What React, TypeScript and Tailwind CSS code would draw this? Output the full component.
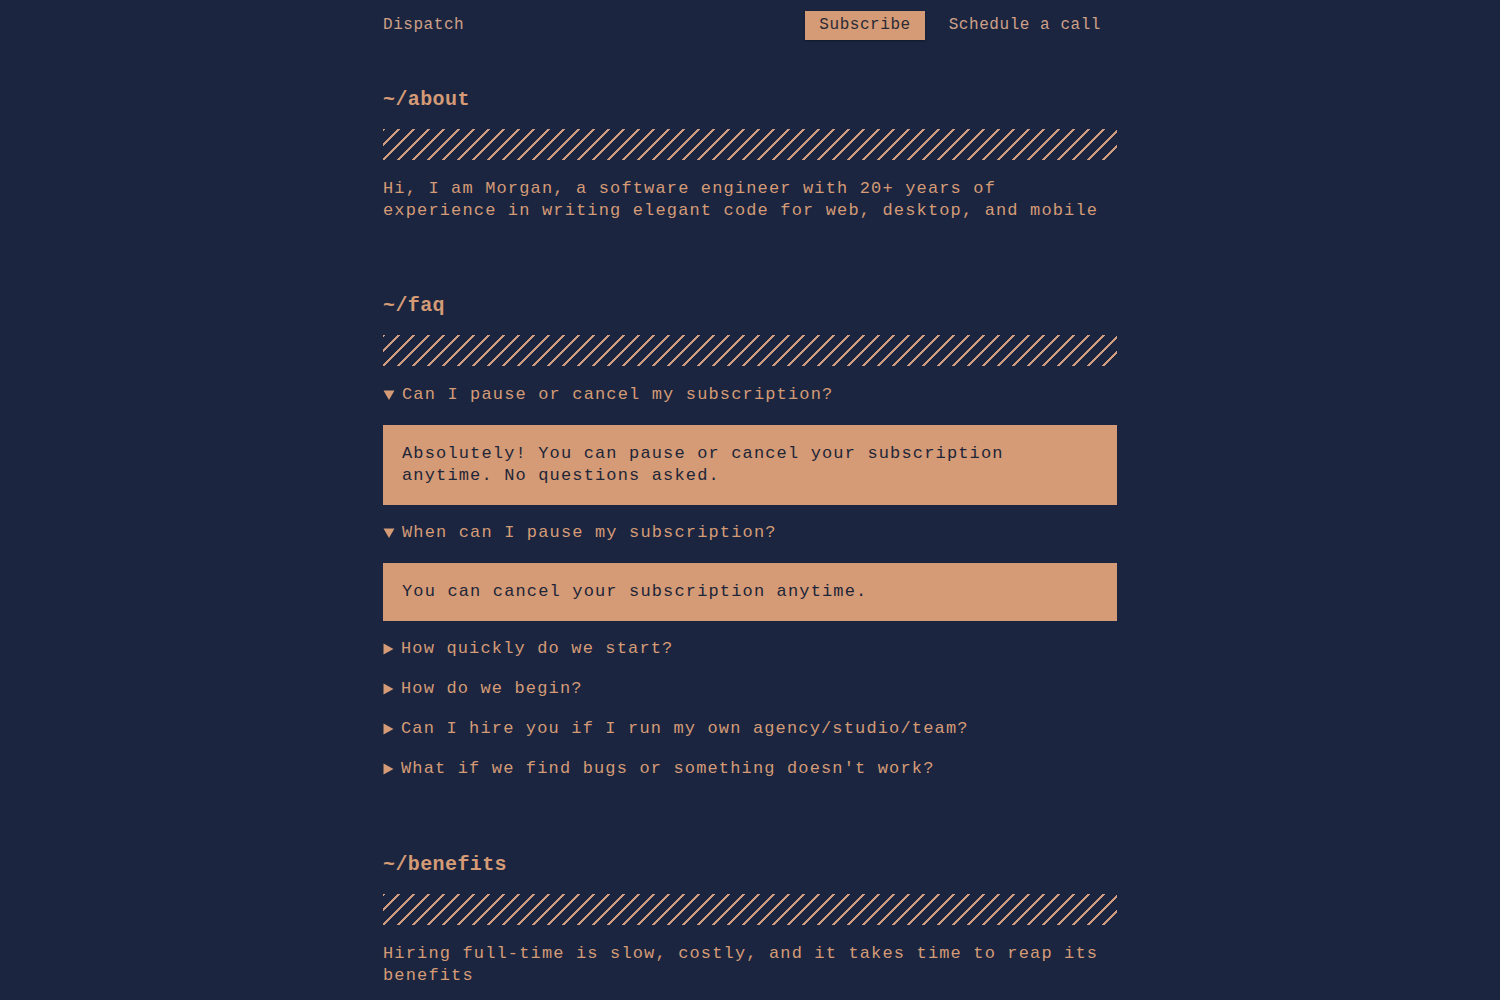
import React from "react";

const ACCENT = "#d49b76";

function Stripe() {
  return (
    <div className="h-[31px] w-full bg-[image:repeating-linear-gradient(135deg,#d09c80_0_1.9px,transparent_1.9px_10.6px)]" />
  );
}

function Down() {
  return (
    <svg width="12" height="10" viewBox="0 0 12 10" className="shrink-0">
      <polygon points="0.5,0.5 11.5,0.5 6,10" fill={ACCENT} />
    </svg>
  );
}

function Right() {
  return (
    <svg width="11" height="12" viewBox="0 0 11 12" className="shrink-0">
      <polygon points="0.5,0.5 10.5,6 0.5,11.5" fill={ACCENT} />
    </svg>
  );
}

function Question({ open, children }: { open?: boolean; children: React.ReactNode }) {
  return (
    <div className="flex h-[22px] items-center gap-[7px] leading-[22px]">
      {open ? <Down /> : <Right />}
      <span>{children}</span>
    </div>
  );
}

function Answer({ children }: { children: React.ReactNode }) {
  return (
    <div className="mt-[19px] bg-[#d49b76] px-[19px] py-[18px] leading-[22px] text-[#1e2538]">
      {children}
    </div>
  );
}

export default function App() {
  return (
    <div className="min-h-screen bg-[#1b2540] font-['Liberation_Mono',monospace] text-[17px] tracking-[1.15px] text-[#d49b76]">
      <div className="mx-auto w-[734px] pb-10">
        <header className="flex h-[50px] items-center justify-between text-[16px] tracking-[0.55px]">
          <span className="text-[#cfa088]">Dispatch</span>
          <div className="flex items-center gap-[8px]">
            <span className="flex h-[29px] items-center bg-[#d49b76] px-[14px] text-[#2a2a35] shadow-[0_1px_2px_rgba(0,0,0,0.35)]">
              Subscribe
            </span>
            <span className="flex h-[29px] items-center px-[16px] text-[#cfa088]">Schedule a call</span>
          </div>
        </header>

        <section className="mt-[38px]">
          <h2 className="text-[20px] font-bold leading-[24px] tracking-[0.4px]">~/about</h2>
          <div className="mt-[17px]">
            <Stripe />
          </div>
          <p className="mt-[18px] leading-[22px]">
            Hi, I am Morgan, a software engineer with 20+ years of experience in writing elegant code for web,
            desktop, and mobile
          </p>
        </section>

        <section className="mt-[72px]">
          <h2 className="text-[20px] font-bold leading-[24px] tracking-[0.4px]">~/faq</h2>
          <div className="mt-[17px]">
            <Stripe />
          </div>
          <div className="mt-[18px] flex flex-col gap-[17px]">
            <div>
              <Question open>Can I pause or cancel my subscription?</Question>
              <Answer>Absolutely! You can pause or cancel your subscription anytime. No questions asked.</Answer>
            </div>
            <div>
              <Question open>When can I pause my subscription?</Question>
              <Answer>You can cancel your subscription anytime.</Answer>
            </div>
            <div className="flex flex-col gap-[18px]">
              <Question>How quickly do we start?</Question>
              <Question>How do we begin?</Question>
              <Question>Can I hire you if I run my own agency/studio/team?</Question>
              <Question>What if we find bugs or something doesn't work?</Question>
            </div>
          </div>
        </section>

        <section className="mt-[73px]">
          <h2 className="text-[20px] font-bold leading-[24px] tracking-[0.4px]">~/benefits</h2>
          <div className="mt-[17px]">
            <Stripe />
          </div>
          <p className="mt-[18px] leading-[22px]">
            Hiring full-time is slow, costly, and it takes time to reap its benefits
          </p>
        </section>
      </div>
    </div>
  );
}
